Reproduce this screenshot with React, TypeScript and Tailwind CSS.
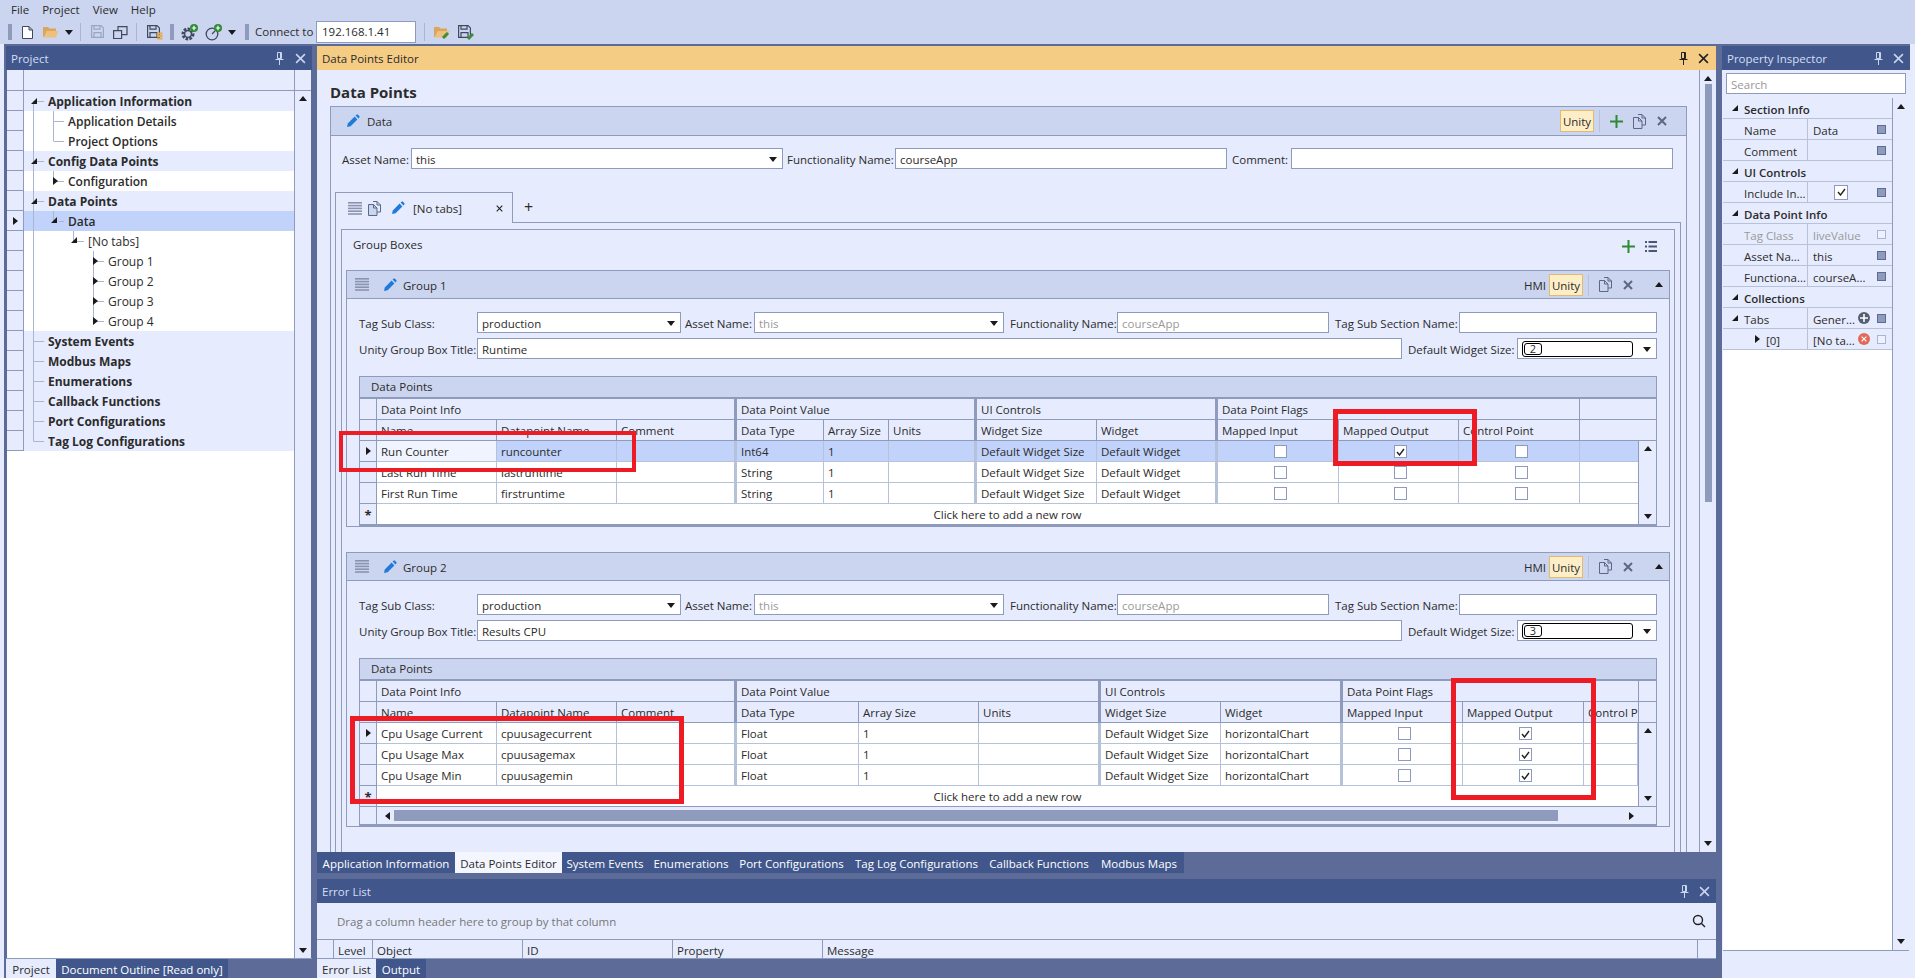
import type { ReactNode } from "react";

/* ---------- small drawn icons ---------- */

function Tri({ dir, className = "" }: { dir: "up" | "down" | "left" | "right" | "corner"; className?: string }) {
  const pts = {
    up: "0,6 4,1 8,6",
    down: "0,2 8,2 4,7",
    left: "6,0 6,8 1,4",
    right: "2,0 2,8 7,4",
    corner: "1,7 7,7 7,1",
  }[dir];
  return (
    <svg width="8" height="8" viewBox="0 0 8 8" className={`shrink-0 ${className}`}>
      <polygon points={pts} fill="#1a1a1a" />
    </svg>
  );
}

function Pencil() {
  return (
    <svg width="14" height="14" viewBox="0 0 14 14" className="shrink-0" fill="#1f7ad9">
      <path d="M1 13l.8-3.6L8.6 2.6l2.8 2.8-6.8 6.8z" />
      <path d="M9.6 1.6l.9-.9a1 1 0 011.4 0l1.4 1.4a1 1 0 010 1.4l-.9.9z" />
    </svg>
  );
}

function Drag() {
  return (
    <svg width="14" height="13" viewBox="0 0 14 13" className="shrink-0" fill="#8a94ae">
      <rect y="0" width="14" height="1.6" />
      <rect y="2.8" width="14" height="1.6" />
      <rect y="5.6" width="14" height="1.6" />
      <rect y="8.4" width="14" height="1.6" />
      <rect y="11.2" width="14" height="1.6" />
    </svg>
  );
}

function Copy() {
  return (
    <svg width="13" height="15" viewBox="0 0 13 15" className="shrink-0" fill="none" stroke="#5a6785" strokeWidth="1">
      <path d="M5 .5h4l3.5 3.5v7H9" />
      <path d="M9 .5V4h3.5" />
      <path d="M.5 3.5h5L9 7v7.5H.5z" fill="#cbd5ef" />
      <path d="M5.5 3.5V7H9" />
    </svg>
  );
}

function Cross({ color = "#5a6785", size = 10, weight = 2 }: { color?: string; size?: number; weight?: number }) {
  return (
    <svg width={size} height={size} viewBox="0 0 10 10" className="shrink-0" stroke={color} strokeWidth={weight}>
      <path d="M1 1l8 8M9 1l-8 8" />
    </svg>
  );
}

function Plus() {
  return (
    <svg width="13" height="13" viewBox="0 0 13 13" className="shrink-0" stroke="#2f8a35" strokeWidth="2">
      <path d="M6.5 0v13M0 6.5h13" />
    </svg>
  );
}

function Pin({ color = "#fff" }: { color?: string }) {
  return (
    <svg width="9" height="13" viewBox="0 0 9 13" className="shrink-0" fill="none" stroke={color} strokeWidth="1">
      <path d="M2.5.5h4v6h-4zM.5 7.5h8M4.5 7.5V13M5.5 1v5.5" />
    </svg>
  );
}

function PanelButtons({ color = "#cbd5ef", pinGap = "gap-[10px]" }: { color?: string; pinGap?: string }) {
  return (
    <div className={`flex items-center ${pinGap}`}>
      <Pin color={color} />
      <Cross color={color} size={11} weight={1.4} />
    </div>
  );
}

function Check() {
  return (
    <svg width="9" height="8" viewBox="0 0 9 8" fill="none" stroke="#222" strokeWidth="1.4">
      <path d="M1 4l2.5 3L8 1" />
    </svg>
  );
}

function Checkbox({ checked = false }: { checked?: boolean }) {
  return (
    <div className="flex h-[13px] w-[13px] shrink-0 items-center justify-center border border-[#8e9bbc] bg-white">
      {checked && <Check />}
    </div>
  );
}

function Grip() {
  return <div className="h-[16px] w-[4px] shrink-0 bg-[radial-gradient(#8e9bbc_1px,transparent_1px)] bg-[length:2px_2px]" />;
}

function ToolSep() {
  return <div className="h-[18px] w-px shrink-0 bg-[#a9b5d4]" />;
}

function Floppy({ color = "#3f4a5e", extra }: { color?: string; extra?: "db" | "link" }) {
  return (
    <svg width="16" height="15" viewBox="0 0 16 15" fill="none" stroke={color} strokeWidth="1.2" className="shrink-0">
      <path d="M.6.6h9.5l2.3 2.3v9.5H.6z" />
      <path d="M3 .6v3.6h6V.6M3 12.4V7.6h7v4.8" />
      {extra === "db" && (
        <path d="M10 8.5h5.5M10 11h5.5M10 13.5h5.5" stroke="#e8a94f" strokeWidth="2" />
      )}
      {extra === "link" && <path d="M10 14l5-5" stroke="#3c8d3c" strokeWidth="3" />}
    </svg>
  );
}

function Folder({ link = false }: { link?: boolean }) {
  return (
    <svg width="16" height="14" viewBox="0 0 16 14" className="shrink-0">
      <path d="M0 2h5l1.5 1.5H13V6H4L1 12H0z" fill="#d9a65a" />
      <path d="M4 6h11.5L13 12.5H1z" fill="#eec07d" />
      {link && <path d="M9 13l5-5" stroke="#3c8d3c" strokeWidth="3" />}
    </svg>
  );
}

function Gear({ variant }: { variant: "gear" | "gauge" }) {
  return (
    <svg width="17" height="17" viewBox="0 0 17 17" className="shrink-0">
      {variant === "gear" ? (
        <>
          <circle cx="7" cy="10" r="4.8" fill="none" stroke="#3f4a5e" strokeWidth="3.4" strokeDasharray="2.4 1.2" />
          <circle cx="7" cy="10" r="3.4" fill="none" stroke="#3f4a5e" strokeWidth="1.4" />
        </>
      ) : (
        <>
          <circle cx="7" cy="10" r="5.8" fill="none" stroke="#3f4a5e" strokeWidth="1.3" />
          <path d="M7 10l3-3" stroke="#3f4a5e" strokeWidth="1.3" />
        </>
      )}
      <circle cx="13" cy="4" r="4" fill="#2f8a35" />
      <path d="M13 1.8v4.4M10.8 4h4.4" stroke="#fff" strokeWidth="1.2" />
    </svg>
  );
}

/* ---------- shell ---------- */

function Title({ text, buttons }: { text: string; buttons: ReactNode }) {
  return (
    <div className="flex h-[24px] shrink-0 items-center justify-between bg-[#41578c] pl-[5px] pr-[6px] text-[#d5def5]">
      <span className="pt-[2px]">{text}</span>
      {buttons}
    </div>
  );
}

function TopBar() {
  return (
    <>
      <div className="flex h-[20px] items-center gap-[13px] pl-[11px]">
        <span>File</span>
        <span>Project</span>
        <span>View</span>
        <span>Help</span>
      </div>
      <div className="flex h-[24px] items-center">
        <div className="ml-[8px]">
          <Grip />
        </div>
        <svg width="11" height="13" viewBox="0 0 11 13" fill="#fff" stroke="#3f4a5e" className="ml-[10px] shrink-0">
          <path d="M.5.5h6.5l3.5 3.5v8.5H.5zM7 .5V4h3.5" />
        </svg>
        <div className="ml-[10px]">
          <Folder />
        </div>
        <Tri dir="down" className="ml-[6px]" />
        <div className="ml-[7px]">
          <ToolSep />
        </div>
        <div className="ml-[10px]">
          <Floppy color="#9aa5c0" />
        </div>
        <svg width="15" height="13" viewBox="0 0 15 13" fill="none" stroke="#3f4a5e" strokeWidth="1.2" className="ml-[6px] shrink-0">
          <path d="M.6 4.6h8v8h-8zM5 4.5V.6h9v8H9" />
        </svg>
        <div className="ml-[8px]">
          <ToolSep />
        </div>
        <div className="ml-[10px]">
          <Floppy extra="db" />
        </div>
        <div className="ml-[7px]">
          <Grip />
        </div>
        <div className="ml-[7px]">
          <Gear variant="gear" />
        </div>
        <div className="ml-[7px]">
          <Gear variant="gauge" />
        </div>
        <Tri dir="down" className="ml-[6px]" />
        <div className="ml-[9px]">
          <Grip />
        </div>
        <span className="ml-[6px] w-[61px] whitespace-nowrap">Connect to</span>
        <div className="flex h-[22px] w-[100px] items-center border border-[#8e9bbc] bg-white pl-[5px]">192.168.1.41</div>
        <div className="ml-[8px]">
          <ToolSep />
        </div>
        <div className="ml-[9px]">
          <Folder link />
        </div>
        <div className="ml-[8px]">
          <Floppy extra="link" />
        </div>
      </div>
    </>
  );
}

/* ---------- project tree ---------- */

const treeRows = [
  { label: "Application Information", pad: "pl-[24px]", kind: "head" },
  { label: "Application Details", pad: "pl-[44px]", kind: "child", semi: true },
  { label: "Project Options", pad: "pl-[44px]", kind: "child", semi: true },
  { label: "Config Data Points", pad: "pl-[24px]", kind: "head" },
  { label: "Configuration", pad: "pl-[44px]", kind: "child", semi: true },
  { label: "Data Points", pad: "pl-[24px]", kind: "head" },
  { label: "Data", pad: "pl-[44px]", kind: "sel", semi: true },
  { label: "[No tabs]", pad: "pl-[64px]", kind: "child" },
  { label: "Group 1", pad: "pl-[84px]", kind: "child" },
  { label: "Group 2", pad: "pl-[84px]", kind: "child" },
  { label: "Group 3", pad: "pl-[84px]", kind: "child" },
  { label: "Group 4", pad: "pl-[84px]", kind: "child" },
  { label: "System Events", pad: "pl-[24px]", kind: "head" },
  { label: "Modbus Maps", pad: "pl-[24px]", kind: "head" },
  { label: "Enumerations", pad: "pl-[24px]", kind: "head" },
  { label: "Callback Functions", pad: "pl-[24px]", kind: "head" },
  { label: "Port Configurations", pad: "pl-[24px]", kind: "head" },
  { label: "Tag Log Configurations", pad: "pl-[24px]", kind: "head" },
];

function TreeLines() {
  // origin of this drawing is the top left of the panel body (x 7, y 70)
  const hline = (x1: number, x2: number, y: number) => <path key={`${x1}-${y}`} d={`M${x1} ${y}.5H${x2}`} />;
  return (
    <svg width="120" height="390" className="pointer-events-none absolute left-0 top-0" fill="none" stroke="#aab5cf">
      <path d="M26.5 31V371.5" />
      {[31, 91, 131, 271, 291, 311, 331, 351, 371].map((y) => hline(27, 37, y))}
      <path d="M46.5 41V71.5M46.5 101V111M46.5 141V151M66.5 161V171M86.5 181V251" />
      {hline(47, 57, 51)}
      {hline(47, 57, 71)}
      {hline(50, 57, 111)}
      {hline(52, 57, 151)}
      {hline(70, 77, 171)}
      {[191, 211, 231, 251].map((y) => hline(90, 97, y))}
    </svg>
  );
}

function TreeTriangles() {
  const marks: { cls: string; dir: "corner" | "right" }[] = [
    { cls: "left-[23px] top-[27px]", dir: "corner" },
    { cls: "left-[23px] top-[87px]", dir: "corner" },
    { cls: "left-[44px] top-[107px]", dir: "right" },
    { cls: "left-[23px] top-[127px]", dir: "corner" },
    { cls: "left-[43px] top-[146px]", dir: "corner" },
    { cls: "left-[63px] top-[166px]", dir: "corner" },
    { cls: "left-[84px] top-[187px]", dir: "right" },
    { cls: "left-[84px] top-[207px]", dir: "right" },
    { cls: "left-[84px] top-[227px]", dir: "right" },
    { cls: "left-[84px] top-[247px]", dir: "right" },
  ];
  return (
    <>
      {marks.map((m) => (
        <div key={m.cls} className={`absolute ${m.cls}`}>
          <Tri dir={m.dir} />
        </div>
      ))}
    </>
  );
}

function ProjectPanel() {
  return (
    <div className="ml-[2px] flex w-[306px] shrink-0 flex-col">
      <Title text="Project" buttons={<PanelButtons pinGap="gap-[11px]" />} />
      <div className="relative mx-[1px] flex min-h-0 flex-1 bg-white">
        <div className="flex min-w-0 flex-1 flex-col">
          <div className="flex h-[21px] shrink-0 border-b border-[#8e9bbc] bg-[#e6ecfe]">
            <div className="w-[17px] border-r border-[#8e9bbc]" />
          </div>
          {treeRows.map((r) => (
            <div key={r.label} className="flex h-[20px] shrink-0">
              <div className="flex w-[17px] shrink-0 items-center justify-center border-b border-r border-[#8e9bbc] bg-[#e6ecfe]">
                {r.kind === "sel" && <Tri dir="right" />}
              </div>
              <div
                className={`flex flex-1 items-center whitespace-nowrap pt-[2px] text-[12px] ${r.pad} ${
                  r.kind === "head" ? "bg-[#e6ecfe] font-bold" : r.kind === "sel" ? "bg-[#c1d3fb]" : "bg-white"
                } ${r.semi ? "font-semibold" : ""}`}
              >
                {r.label}
              </div>
            </div>
          ))}
        </div>
        <div className="flex w-[17px] shrink-0 flex-col items-center justify-between border-l border-[#8e9bbc] bg-[#e6ecfe]">
          <div className="flex h-[21px] w-full border-b border-[#8e9bbc]" />
          <Tri dir="up" className="mt-[4px] mb-auto" />
          <Tri dir="down" className="mb-[4px]" />
        </div>
        <TreeLines />
        <TreeTriangles />
      </div>
      <div className="flex h-[20px] shrink-0 border-t border-[#8e9bbc] bg-[#5d6b99]">
        <div className="flex w-[50px] items-center justify-center bg-[#e6ecfe] pt-[3px]">Project</div>
        <div className="flex w-[172px] items-center justify-center whitespace-nowrap bg-[#41578c] pt-[3px] text-white">
          Document Outline [Read only]
        </div>
      </div>
    </div>
  );
}

/* ---------- form bits ---------- */

function Field({
  width,
  value,
  arrow = false,
  muted = false,
}: {
  width: string;
  value: string;
  arrow?: boolean;
  muted?: boolean;
}) {
  return (
    <div
      className={`flex h-[21px] shrink-0 items-center justify-between border border-[#8e9bbc] bg-white pl-[4px] pr-[5px] ${width} ${
        muted ? "text-[#9a9a9a]" : ""
      }`}
    >
      <span className="pt-[2px]">{value}</span>
      {arrow && <Tri dir="down" />}
    </div>
  );
}

function Label({ width, children }: { width: string; children: ReactNode }) {
  return <div className={`shrink-0 whitespace-nowrap pt-[2px] ${width}`}>{children}</div>;
}

function SizeCombo({ n }: { n: string }) {
  return (
    <div className="flex h-[21px] w-[140px] shrink-0 items-center justify-between border border-[#8e9bbc] bg-white pl-[4px] pr-[5px]">
      <div className="flex h-[16px] w-[111px] items-center rounded-[3px] border border-black pl-px">
        <div className="flex h-[12px] w-[18px] items-center justify-center rounded-[3px] border border-black text-[11px] leading-none">
          {n}
        </div>
      </div>
      <Tri dir="down" />
    </div>
  );
}

function UnityBadge() {
  return (
    <div className="flex h-[22px] w-[34px] items-center justify-center border border-[#e2bb6e] bg-[#fdeec8] pt-[2px]">Unity</div>
  );
}

/* ---------- data grids ---------- */

const g1Cols = "grid grid-cols-[17px_120px_120px_120px_87px_65px_88px_120px_121px_121px_120px_121px_1fr]";
const g2Cols = "grid grid-cols-[17px_120px_120px_120px_122px_120px_122px_120px_122px_120px_121px_55px_1fr]";

type Row = {
  name: string;
  dp: string;
  type: string;
  widget: string;
  output: boolean;
  selected?: boolean;
  current?: boolean;
};

const cell = "flex items-center overflow-hidden whitespace-nowrap border-b border-r border-[#b6c1da] pl-[4px] pt-[1px]";
const thick = "border-r-[3px] border-r-[#b6c1da]";
const hcell = "flex items-center overflow-hidden whitespace-nowrap border-b border-r border-[#8e9bbc] pl-[4px] pt-[1px]";
const hthick = "border-r-[3px] border-r-[#8e9bbc]";

function GridRows({ rows, cols, wide }: { rows: Row[]; cols: string; wide?: boolean }) {
  return (
    <>
      {rows.map((r) => {
        const bg = r.selected ? "bg-[#c1d3fb]" : "bg-white";
        return (
          <div key={r.name} className={`${cols} h-[21px]`}>
            <div className="flex items-center justify-center border-b border-r border-[#8e9bbc] bg-[#e6ecfe]">
              {r.current && <Tri dir="right" />}
            </div>
            <div className={`${cell} ${r.selected ? "bg-[#f0f4ff]" : "bg-white"}`}>{r.name}</div>
            <div className={`${cell} ${bg}`}>{r.dp}</div>
            <div className={`${cell} ${thick} ${bg}`} />
            <div className={`${cell} ${bg}`}>{r.type}</div>
            <div className={`${cell} ${bg}`}>1</div>
            <div className={`${cell} ${thick} ${bg}`} />
            <div className={`${cell} ${bg}`}>Default Widget Size</div>
            <div className={`${cell} ${thick} ${bg}`}>{r.widget}</div>
            <div className={`${cell} justify-center pl-0 pt-0 ${bg}`}>
              <Checkbox />
            </div>
            <div className={`${cell} justify-center pl-0 pt-0 ${bg}`}>
              <Checkbox checked={r.output} />
            </div>
            {wide ? (
              <div className={`${cell} pl-[53px] pt-0 ${bg}`}>
                <Checkbox />
              </div>
            ) : (
              <>
                <div className={`${cell} justify-center pl-0 pt-0 ${bg}`}>
                  <Checkbox />
                </div>
                <div className={`${cell} border-r-0 ${bg}`} />
              </>
            )}
          </div>
        );
      })}
    </>
  );
}

function NewRow() {
  return (
    <div className="flex h-[20px]">
      <div className="flex w-[17px] shrink-0 items-center justify-center border-r border-[#8e9bbc] bg-[#e6ecfe] pt-[3px] text-[13px] font-bold leading-none">
        *
      </div>
      <div className="flex flex-1 items-center justify-center bg-white pt-[2px]">Click here to add a new row</div>
    </div>
  );
}

function VScroll() {
  return (
    <div className="flex w-[18px] shrink-0 flex-col items-center justify-between border-l border-[#8e9bbc] bg-[#e6ecfe] py-[4px]">
      <Tri dir="up" />
      <Tri dir="down" />
    </div>
  );
}

function GridCaption() {
  return <div className="flex h-[22px] items-center border-b-2 border-[#8e9bbc] bg-[#cbd5ef] pl-[11px]">Data Points</div>;
}

function Group1Grid({ rows }: { rows: Row[] }) {
  return (
    <div className="border-x border-b-2 border-t border-[#8e9bbc]">
      <GridCaption />
      <div className={`${g1Cols} h-[21px] bg-[#e6ecfe]`}>
        <div className={hcell} />
        <div className={`${hcell} ${hthick} col-span-3`}>Data Point Info</div>
        <div className={`${hcell} ${hthick} col-span-3`}>Data Point Value</div>
        <div className={`${hcell} ${hthick} col-span-2`}>UI Controls</div>
        <div className={`${hcell} col-span-3`}>Data Point Flags</div>
        <div className={`${hcell} border-r-0`} />
      </div>
      <div className={`${g1Cols} h-[21px] bg-[#e6ecfe]`}>
        <div className={hcell} />
        <div className={hcell}>Name</div>
        <div className={hcell}>Datapoint Name</div>
        <div className={`${hcell} ${hthick}`}>Comment</div>
        <div className={hcell}>Data Type</div>
        <div className={hcell}>Array Size</div>
        <div className={`${hcell} ${hthick}`}>Units</div>
        <div className={hcell}>Widget Size</div>
        <div className={`${hcell} ${hthick}`}>Widget</div>
        <div className={hcell}>Mapped Input</div>
        <div className={hcell}>Mapped Output</div>
        <div className={hcell}>Control Point</div>
        <div className={`${hcell} border-r-0`} />
      </div>
      <div className="flex">
        <div className="min-w-0 flex-1">
          <GridRows rows={rows} cols="grid grid-cols-[17px_120px_120px_120px_87px_65px_88px_120px_121px_121px_120px_121px_1fr]" />
          <NewRow />
        </div>
        <VScroll />
      </div>
    </div>
  );
}

function Group2Grid({ rows }: { rows: Row[] }) {
  return (
    <div className="border-x border-b-2 border-t border-[#8e9bbc]">
      <GridCaption />
      <div className={`${g2Cols} h-[21px] bg-[#e6ecfe]`}>
        <div className={hcell} />
        <div className={`${hcell} ${hthick} col-span-3`}>Data Point Info</div>
        <div className={`${hcell} ${hthick} col-span-3`}>Data Point Value</div>
        <div className={`${hcell} ${hthick} col-span-2`}>UI Controls</div>
        <div className={`${hcell} col-span-3`}>Data Point Flags</div>
        <div className={`${hcell} border-r-0`} />
      </div>
      <div className={`${g2Cols} h-[21px] bg-[#e6ecfe]`}>
        <div className={hcell} />
        <div className={hcell}>Name</div>
        <div className={hcell}>Datapoint Name</div>
        <div className={`${hcell} ${hthick}`}>Comment</div>
        <div className={hcell}>Data Type</div>
        <div className={hcell}>Array Size</div>
        <div className={`${hcell} ${hthick}`}>Units</div>
        <div className={hcell}>Widget Size</div>
        <div className={`${hcell} ${hthick}`}>Widget</div>
        <div className={hcell}>Mapped Input</div>
        <div className={hcell}>Mapped Output</div>
        <div className={hcell}>Control Point</div>
        <div className={`${hcell} border-r-0`} />
      </div>
      <div className="flex">
        <div className="min-w-0 flex-1">
          <GridRows rows={rows} cols="grid grid-cols-[17px_120px_120px_120px_122px_120px_122px_120px_122px_120px_121px_1fr]" wide />
          <NewRow />
        </div>
        <VScroll />
      </div>
      <div className="flex h-[18px] items-center border-t border-[#8e9bbc] bg-[#e6ecfe]">
        <div className="h-full w-[17px] shrink-0 border-r border-[#8e9bbc]" />
        <Tri dir="left" className="ml-[7px]" />
        <div className="ml-[2px] h-[11px] w-[1164px] bg-[#8e9bbc]" />
        <Tri dir="right" className="ml-[69px]" />
      </div>
    </div>
  );
}

/* ---------- group box ---------- */

function GroupBox({
  title,
  heading,
  size,
  children,
  className = "",
}: {
  title: string;
  heading: string;
  size: string;
  children: ReactNode;
  className?: string;
}) {
  return (
    <div className={`border border-[#8e9bbc] ${className}`}>
      <div className="flex h-[28px] items-center border-b border-[#8e9bbc] bg-[#cbd5ef] pl-[8px]">
        <Drag />
        <div className="ml-[14px]">
          <Pencil />
        </div>
        <span className="ml-[6px] pt-[2px]">{title}</span>
        <div className="ml-auto flex items-center">
          <span className="mr-[3px] pt-[2px]">HMI</span>
          <UnityBadge />
          <div className="ml-[5px] h-[22px] w-px bg-[#b6c1da]" />
          <div className="ml-[10px]">
            <Copy />
          </div>
          <div className="ml-[11px]">
            <Cross />
          </div>
          <Tri dir="up" className="ml-[22px] mr-[6px]" />
        </div>
      </div>
      <div className="flex items-center pl-[12px] pt-[13px]">
        <Label width="w-[118px]">Tag Sub Class:</Label>
        <Field width="w-[204px]" value="production" arrow />
        <Label width="w-[73px] pl-[4px]">Asset Name:</Label>
        <Field width="w-[250px]" value="this" arrow muted />
        <Label width="w-[113px] pl-[6px]">Functionality Name:</Label>
        <Field width="w-[212px]" value="courseApp" muted />
        <Label width="w-[130px] pl-[6px]">Tag Sub Section Name:</Label>
        <Field width="w-[198px]" value="" />
      </div>
      <div className="flex items-center pl-[12px] pt-[5px]">
        <Label width="w-[118px]">Unity Group Box Title:</Label>
        <Field width="w-[925px]" value={heading} />
        <Label width="w-[115px] pl-[6px]">Default Widget Size:</Label>
        <SizeCombo n={size} />
      </div>
      <div className="ml-[12px] mr-[12px] mt-[17px]">{children}</div>
    </div>
  );
}

const group1: Row[] = [
  { name: "Run Counter", dp: "runcounter", type: "Int64", widget: "Default Widget", output: true, selected: true, current: true },
  { name: "Last Run Time", dp: "lastruntime", type: "String", widget: "Default Widget", output: false },
  { name: "First Run Time", dp: "firstruntime", type: "String", widget: "Default Widget", output: false },
];

const group2: Row[] = [
  { name: "Cpu Usage Current", dp: "cpuusagecurrent", type: "Float", widget: "horizontalChart", output: true, current: true },
  { name: "Cpu Usage Max", dp: "cpuusagemax", type: "Float", widget: "horizontalChart", output: true },
  { name: "Cpu Usage Min", dp: "cpuusagemin", type: "Float", widget: "horizontalChart", output: true },
];

/* ---------- editor ---------- */

function Editor() {
  return (
    <div className="flex min-h-0 flex-1 flex-col">
      <div className="flex h-[24px] shrink-0 items-center justify-between bg-[#f5cc84] pl-[5px] pr-[7px]">
        <span className="pt-[2px]">Data Points Editor</span>
        <PanelButtons color="#222" pinGap="gap-[10px]" />
      </div>
      <div className="flex min-h-0 flex-1 bg-[#e6ecfe]">
        <div className="min-w-0 flex-1 overflow-hidden pl-[13px] pr-[12px]">
          <div className="flex h-[36px] items-end pb-[3px] text-[15px] font-bold leading-[22px]">Data Points</div>
          <div className="h-[760px] border-x border-t border-[#8e9bbc]">
            <div className="flex h-[29px] items-center border-b border-[#8e9bbc] bg-[#cbd5ef] pl-[15px]">
              <Pencil />
              <span className="ml-[7px] pt-[2px]">Data</span>
              <div className="ml-auto flex items-center">
                <UnityBadge />
                <div className="ml-[5px] h-[22px] w-px bg-[#b6c1da]" />
                <div className="ml-[10px]">
                  <Plus />
                </div>
                <div className="ml-[10px]">
                  <Copy />
                </div>
                <div className="ml-[11px] mr-[19px]">
                  <Cross />
                </div>
              </div>
            </div>
            <div className="flex items-center pl-[11px] pt-[12px]">
              <Label width="w-[69px]">Asset Name:</Label>
              <Field width="w-[372px]" value="this" arrow />
              <Label width="w-[112px] pl-[4px]">Functionality Name:</Label>
              <Field width="w-[332px]" value="courseApp" />
              <Label width="w-[64px] pl-[5px]">Comment:</Label>
              <Field width="w-[382px]" value="" />
            </div>
            <div className="ml-[4px] mr-[5px] mt-[23px]">
              <div className="flex h-[31px] items-end">
                <div className="flex h-[31px] w-[178px] items-center border-x border-t border-[#8e9bbc] bg-[#e6ecfe] pl-[12px]">
                  <Drag />
                  <div className="ml-[6px]">
                    <Copy />
                  </div>
                  <div className="ml-[10px]">
                    <Pencil />
                  </div>
                  <span className="ml-[8px] pt-[2px]">[No tabs]</span>
                  <div className="ml-auto mr-[9px]">
                    <Cross color="#222" size={7} weight={1.6} />
                  </div>
                </div>
                <div className="flex h-[31px] flex-1 items-center border-b border-[#8e9bbc] pl-[11px] text-[16px] leading-none">+</div>
              </div>
              <div className="h-[640px] border-x border-[#8e9bbc] pl-[5px] pr-[5px] pt-[6px]">
                <div className="h-[640px] border-x border-t border-[#8e9bbc] pl-[4px] pr-[4px]">
                  <div className="flex h-[40px] items-start pl-[7px] pt-[9px]">
                    <span>Group Boxes</span>
                    <div className="ml-auto mr-[13px] mt-[1px] flex items-center gap-[10px]">
                      <Plus />
                      <svg width="12" height="11" viewBox="0 0 12 11" fill="#4a5878">
                        <rect width="2" height="2" />
                        <rect x="3.5" width="8.5" height="2" />
                        <rect y="4.5" width="2" height="2" />
                        <rect x="3.5" y="4.5" width="8.5" height="2" />
                        <rect y="9" width="2" height="2" />
                        <rect x="3.5" y="9" width="8.5" height="2" />
                      </svg>
                    </div>
                  </div>
                  <GroupBox title="Group 1" heading="Runtime" size="2">
                    <Group1Grid rows={group1} />
                  </GroupBox>
                  <GroupBox title="Group 2" heading="Results CPU" size="3" className="mt-[25px]">
                    <Group2Grid rows={group2} />
                  </GroupBox>
                </div>
              </div>
            </div>
          </div>
        </div>
        <div className="flex w-[17px] shrink-0 flex-col items-center border-l border-[#8e9bbc] pt-[5px]">
          <Tri dir="up" />
          <div className="mt-[1px] h-[418px] w-[7px] bg-[#8e9bbc]" />
          <Tri dir="down" className="mt-auto mb-[5px]" />
        </div>
      </div>
    </div>
  );
}

const docTabs = [
  { label: "Application Information", w: "w-[138px]" },
  { label: "Data Points Editor", w: "w-[107px]", active: true },
  { label: "System Events", w: "w-[86px]" },
  { label: "Enumerations", w: "w-[86px]" },
  { label: "Port Configurations", w: "w-[115px]" },
  { label: "Tag Log Configurations", w: "w-[135px]" },
  { label: "Callback Functions", w: "w-[110px]" },
  { label: "Modbus Maps", w: "w-[90px]" },
];

const errorCols = [
  { label: "", w: "w-[17px]" },
  { label: "Level", w: "w-[39px]" },
  { label: "Object", w: "w-[150px]" },
  { label: "ID", w: "w-[150px]" },
  { label: "Property", w: "w-[150px]" },
  { label: "Message", w: "w-[875px]" },
  { label: "", w: "flex-1" },
];

function CenterColumn() {
  return (
    <div className="ml-[5px] flex w-[1399px] shrink-0 flex-col">
      <Editor />
      <div className="flex h-[21px] shrink-0">
        {docTabs.map((t) => (
          <div
            key={t.label}
            className={`flex items-center justify-center whitespace-nowrap pt-[2px] ${t.w} ${
              t.active ? "bg-[#f3f6ff]" : "bg-[#41578c] text-white"
            }`}
          >
            {t.label}
          </div>
        ))}
      </div>
      <div className="h-[6px] shrink-0" />
      <div className="h-[79px] shrink-0">
        <Title text="Error List" buttons={<PanelButtons />} />
        <div className="bg-[#e6ecfe]">
          <div className="flex h-[37px] items-center justify-between border-b border-[#8e9bbc] pl-[20px] pr-[10px] text-[#777]">
            <span className="pt-[2px]">Drag a column header here to group by that column</span>
            <svg width="14" height="14" viewBox="0 0 14 14" fill="none" stroke="#222" strokeWidth="1.4">
              <circle cx="6" cy="6" r="4.5" />
              <path d="M9.5 9.5L13 13" />
            </svg>
          </div>
          <div className="flex h-[18px]">
            {errorCols.map((c, i) => (
              <div
                key={i}
                className={`flex items-center border-r border-[#8e9bbc] pl-[4px] pt-[4px] ${c.w} ${i === 6 ? "border-r-0" : ""}`}
              >
                {c.label}
              </div>
            ))}
          </div>
        </div>
      </div>
      <div className="flex h-[20px] shrink-0 border-t border-[#8e9bbc]">
        <div className="flex w-[59px] items-center justify-center bg-[#e6ecfe] pt-[3px]">Error List</div>
        <div className="flex w-[50px] items-center justify-center bg-[#41578c] pt-[3px] text-white">Output</div>
      </div>
    </div>
  );
}

/* ---------- property inspector ---------- */

type PropRow = {
  name: string;
  value?: string;
  section?: boolean;
  muted?: boolean;
  check?: boolean;
  open?: boolean;
  mark?: "on" | "off";
  action?: "add" | "remove";
  nested?: boolean;
};

const propRows: PropRow[] = [
  { name: "Section Info", section: true },
  { name: "Name", value: "Data", mark: "on" },
  { name: "Comment", mark: "on" },
  { name: "UI Controls", section: true },
  { name: "Include In...", check: true, mark: "on" },
  { name: "Data Point Info", section: true },
  { name: "Tag Class", value: "liveValue", muted: true, mark: "off" },
  { name: "Asset Na...", value: "this", mark: "on" },
  { name: "Functiona...", value: "courseA...", mark: "on" },
  { name: "Collections", section: true },
  { name: "Tabs", value: "Gener...", open: true, mark: "on", action: "add" },
  { name: "[0]", value: "[No  ta...", mark: "off", action: "remove", nested: true },
];

function PropertyPanel() {
  return (
    <div className="ml-[6px] flex w-[188px] shrink-0 flex-col bg-[#e6ecfe]">
      <Title text="Property Inspector" buttons={<PanelButtons />} />
      <div className="mx-[1px] flex min-h-0 flex-1 flex-col border-b border-[#8e9bbc] bg-white">
        <div className="shrink-0 bg-[#e6ecfe] px-[3px] pt-[3px] pb-[4px]">
          <div className="flex h-[21px] items-center border border-[#8e9bbc] bg-white pl-[4px] pt-[2px] text-[#999]">Search</div>
        </div>
        <div className="flex min-h-0 flex-1">
          <div className="min-w-0 flex-1">
            {propRows.map((r) =>
              r.section ? (
                <div
                  key={r.name}
                  className="flex h-[21px] items-center border-b border-[#b6c1da] bg-[#e6ecfe] pl-[8px] font-semibold"
                >
                  <Tri dir="corner" />
                  <span className="ml-[5px] pt-[4px]">{r.name}</span>
                </div>
              ) : (
                <div key={r.name} className={`flex h-[21px] border-b border-[#b6c1da] bg-[#e6ecfe] ${r.muted ? "text-[#999]" : ""}`}>
                  <div className="flex w-[85px] shrink-0 items-center overflow-hidden whitespace-nowrap border-r border-[#b6c1da]">
                    {r.open && (
                      <div className="ml-[8px]">
                        <Tri dir="corner" />
                      </div>
                    )}
                    {r.nested ? (
                      <>
                        <Tri dir="right" className="ml-[30px]" />
                        <span className="ml-[5px] pt-[4px]">{r.name}</span>
                      </>
                    ) : (
                      <span className={`pt-[4px] ${r.open ? "ml-[5px]" : "ml-[21px]"}`}>{r.name}</span>
                    )}
                  </div>
                  <div className="flex min-w-0 flex-1 items-center pl-[5px]">
                    {r.check ? (
                      <div className="ml-[21px] flex h-[15px] w-[14px] items-center justify-center border border-[#8e9bbc] bg-white">
                        <Check />
                      </div>
                    ) : (
                      <span className="overflow-hidden whitespace-nowrap pt-[4px]">{r.value}</span>
                    )}
                    <div className="ml-auto mr-[6px] flex shrink-0 items-center gap-[7px]">
                      {r.action && (
                        <div
                          className={`flex h-[12px] w-[12px] items-center justify-center rounded-full ${
                            r.action === "add" ? "bg-[#555f73]" : "bg-[#e2685a]"
                          }`}
                        >
                          {r.action === "add" ? (
                            <svg width="8" height="8" viewBox="0 0 8 8" stroke="#fff" strokeWidth="1.6">
                              <path d="M4 0v8M0 4h8" />
                            </svg>
                          ) : (
                            <Cross color="#fff" size={6} weight={1.8} />
                          )}
                        </div>
                      )}
                      <div
                        className={`h-[9px] w-[9px] border ${
                          r.mark === "on" ? "border-[#5d6b99] bg-[#8e9bbc]" : "border-[#a9b5d4] bg-[#eef2ff]"
                        }`}
                      />
                    </div>
                  </div>
                </div>
              ),
            )}
          </div>
          <div className="flex w-[17px] shrink-0 flex-col items-center justify-between border-l border-[#8e9bbc] bg-[#e6ecfe] py-[5px]">
            <Tri dir="up" />
            <Tri dir="down" />
          </div>
        </div>
      </div>
      <div className="h-[27px] shrink-0" />
    </div>
  );
}

/* ---------- page ---------- */

export default function App() {
  return (
    <div className="relative flex h-[978px] w-[1915px] flex-col overflow-hidden bg-[#cbd5ef] font-['Open_Sans',sans-serif] text-[11.5px] leading-none text-[#2b2b2b]">
      <TopBar />
      <div className="flex min-h-0 flex-1 bg-[#5d6b99] pt-[2px]">
        <div className="-mt-[2px] w-[4px] shrink-0 bg-[#e6ecfe]" />
        <ProjectPanel />
        <CenterColumn />
        <PropertyPanel />
        <div className="-mt-[2px] flex-1 bg-[#e6ecfe]" />
      </div>

      {/* red annotation boxes drawn over the screenshot */}
      <div className="absolute left-[339px] top-[431px] h-[41px] w-[297px] border-[4px] border-[#ed1c24]" />
      <div className="absolute left-[1333px] top-[409px] h-[57px] w-[144px] border-[5px] border-[#ed1c24]" />
      <div className="absolute left-[350px] top-[716px] h-[88px] w-[334px] border-[5px] border-[#ed1c24]" />
      <div className="absolute left-[1451px] top-[678px] h-[122px] w-[145px] border-[5px] border-[#ed1c24]" />
    </div>
  );
}
